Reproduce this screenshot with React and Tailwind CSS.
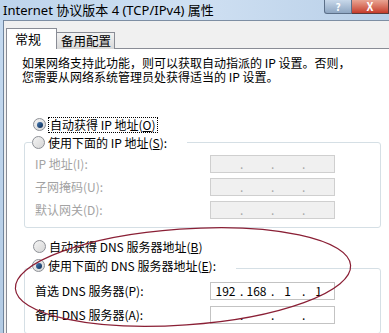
import React from 'react';

const font = { fontFamily: '"Noto Sans CJK SC", "Noto Sans", sans-serif' };

const Radio = ({ checked }) => (
  <span className="relative inline-flex items-center justify-center w-[13px] h-[13px] rounded-full border border-[#8d9096] bg-gradient-to-br from-[#f4f4f4] to-[#d6d6d6] shrink-0">
    {checked && (
      <span className="w-[6px] h-[6px] rounded-full bg-gradient-to-br from-[#4a7fb8] to-[#0c2a52]" />
    )}
  </span>
);

const IpBox = ({ values, disabled }) => {
  const v = values || ['', '', '', ''];
  return (
    <div
      className={`flex items-center w-[125px] h-[18px] border ${disabled ? 'border-[#cfcfcf] bg-[#f0f0f0] text-[#a8a8a8]' : 'border-[#c3c3c3] bg-white text-black'} text-[12px] leading-none`}
    >
      {v.map((seg, i) => (
        <React.Fragment key={i}>
          <span className="w-[29px] text-center">{seg}</span>
          {i < 3 && <span className="w-[2px] text-center">.</span>}
        </React.Fragment>
      ))}
    </div>
  );
};

const Row = ({ label, children, disabled, tall }) => (
  <div className={`flex items-center justify-between ${tall ? 'h-[24px]' : 'h-[23px]'} pl-[10px] pr-[45px]`}>
    <span className={disabled ? 'text-[#a3a3a3]' : 'text-black'}>{label}</span>
    {children}
  </div>
);

export default function App() {
  return (
    <div className="relative w-[389px] h-[333px] overflow-hidden bg-gradient-to-b from-[#c6dbf1] to-[#b3cbe4] text-[12px] leading-[14px]" style={font}>
      {/* title bar */}
      <div className="relative h-[20px] flex items-center pl-[3px] bg-gradient-to-r from-[#bdd4ec] via-[#cfe0f2] to-[#b8cfe8]">
        <span className="text-[13px] text-black" style={{ fontFamily: '"Noto Sans", "Noto Sans CJK SC", sans-serif' }}>
          Internet 协议版本 4 (TCP/IPv4) 属性
        </span>
        <div className="absolute right-0 top-0 flex">
          <div className="w-[28px] h-[14px] rounded-bl-[3px] border border-t-0 border-[#5b6f88] bg-gradient-to-b from-[#c8d8ea] to-[#8ea6c2] flex items-center justify-center text-white text-[10px] leading-none font-bold">?</div>
          <div className="w-[37px] h-[14px] border border-t-0 border-l-0 border-[#5b3a3a] bg-gradient-to-b from-[#e8a493] to-[#c4392a] flex items-center justify-center text-white text-[11px] leading-none font-bold">X</div>
        </div>
      </div>

      <div className="flex h-[313px]">
        <div className="w-[4px] border-r border-[#6f849c]" />
        <div className="flex-1 bg-[#f0f0f0] border-t border-[#7d8ea3] pl-[2px] pt-[7px]">
          {/* tabs */}
          <div className="flex items-end h-[21px]">
            <div className="relative z-10 w-[51px] h-[21px] bg-white border border-b-0 border-[#898c95] flex items-center pl-[8px] text-[13px] whitespace-nowrap">常规</div>
            <div className="w-[58px] h-[17px] bg-gradient-to-b from-[#f2f2f2] to-[#d9d9d9] border border-l-0 border-b-0 border-[#898c95] flex items-center pl-[4px] text-[12.5px] whitespace-nowrap">备用配置</div>
          </div>
          {/* panel */}
          <div className="-mt-[1px] h-[300px] bg-white border border-r-0 border-[#898c95] pl-[15px] pt-[7px]">
            <p className="whitespace-nowrap">如果网络支持此功能，则可以获取自动指派的 IP 设置。否则，</p>
            <p className="whitespace-nowrap">您需要从网络系统管理员处获得适当的 IP 设置。</p>

            <div className="mt-[31px] ml-[11px] flex items-center gap-[2px] h-[19px]">
              <Radio checked />
              <span className="px-[1px] border border-dotted border-black leading-[14px]">自动获得 IP 地址(<u>O</u>)</span>
            </div>

            {/* static IP group */}
            <div className="mt-[8px] ml-[2px] w-[357px] border border-[#d5dfe5] rounded-[3px] pb-[6px]">
              <div className="-mt-[10px] ml-[7px] w-fit pr-[20px] flex items-center gap-[3px] bg-white h-[19px]">
                <Radio />
                <span>使用下面的 IP 地址(<u>S</u>):</span>
              </div>
              <Row label="IP 地址(I):" disabled><IpBox disabled /></Row>
              <Row label="子网掩码(U):" disabled><IpBox disabled /></Row>
              <Row label="默认网关(D):" disabled><IpBox disabled /></Row>
            </div>

            <div className="mt-[9px] ml-[11px] flex items-center gap-[3px] h-[19px]">
              <Radio />
              <span>自动获得 DNS 服务器地址(<u>B</u>)</span>
            </div>

            {/* static DNS group */}
            <div className="mt-[12px] ml-[2px] w-[357px] border border-[#d5dfe5] rounded-[3px] pb-[6px]">
              <div className="-mt-[13px] ml-[7px] w-fit pr-[20px] flex items-center gap-[3px] bg-white h-[19px]">
                <Radio checked />
                <span>使用下面的 DNS 服务器地址(<u>E</u>):</span>
              </div>
              <div className="mt-[4px]">
                <Row tall label="首选 DNS 服务器(P):"><IpBox values={['192', '168', '1', '1']} /></Row>
                <Row tall label="备用 DNS 服务器(A):"><IpBox /></Row>
              </div>
            </div>
          </div>
        </div>
      </div>

      {/* hand-drawn ellipse annotation */}
      <svg className="absolute left-0 top-0 pointer-events-none" width="389" height="333">
        <ellipse cx="183" cy="277" rx="168" ry="48" transform="rotate(-4 183 277)" fill="none" stroke="#8a1f35" strokeWidth="1.2" />
      </svg>
    </div>
  );
}
